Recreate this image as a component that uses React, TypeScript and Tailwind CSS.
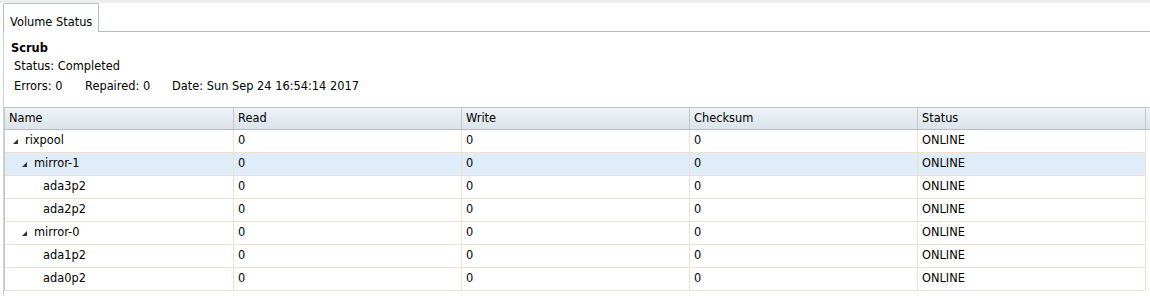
import React from "react";

type Row = { name: string; level: 0 | 1 | 2; open?: boolean; selected?: boolean };

const ROWS: Row[] = [
  { name: "rixpool", level: 0, open: true },
  { name: "mirror-1", level: 1, open: true, selected: true },
  { name: "ada3p2", level: 2 },
  { name: "ada2p2", level: 2 },
  { name: "mirror-0", level: 1, open: true },
  { name: "ada1p2", level: 2 },
  { name: "ada0p2", level: 2 },
];

const INDENT = ["w-0", "w-[9px]", "w-[18px]"];

const COLS = ["Name", "Read", "Write", "Checksum", "Status"];
const WIDTHS = ["w-[229px]", "w-[228px]", "w-[228px]", "w-[228px]", "w-[228px]"];

function Expander() {
  return (
    <svg width="5" height="5" viewBox="0 0 5 5" className="block">
      <polygon points="5,0 5,5 0,5" fill="#333" />
    </svg>
  );
}

export default function App() {
  return (
    <div className="w-[1150px] h-[296px] overflow-hidden bg-white text-[11.4px] text-black font-['DejaVu_Sans',Verdana,sans-serif]">
      {/* top strip */}
      <div className="h-[3px] bg-[#ededed]" />

      {/* tab bar */}
      <div className="flex h-[29px]">
        <div className="ml-[3px] w-[96px] h-[29px] border border-b-0 border-[#b3bcc8] rounded-t-[2px] bg-gradient-to-b from-white to-[#fbfcfe] flex items-end pl-[6px] pb-[3px] leading-[14px]">
          Volume Status
        </div>
        <div className="flex-1 border-b border-[#b3bcc8]" />
      </div>

      {/* panel */}
      <div className="ml-[3px] h-[264px] border-l border-[#cfd3d8]">
        <div className="pt-[9px] pl-[7px] font-bold leading-[14px]">Scrub</div>
        <div className="mt-[4px] pl-[10px] leading-[14px]">Status: Completed</div>
        <div className="mt-[6px] pl-[10px] flex leading-[14px]">
          <span className="w-[71px]">Errors: 0</span>
          <span className="w-[87px]">Repaired: 0</span>
          <span>Date: Sun Sep 24 16:54:14 2017</span>
        </div>

        {/* grid */}
        <div className="mt-[14px] border-l border-[#c4c8cd]">
          <div className="flex h-[23px] border-t border-b border-t-[#c2c6cc] border-b-[#b6bdc6] bg-gradient-to-b from-[#eef2f7] to-[#dce3eb]">
            {COLS.map((c, i) => (
              <div
                key={c}
                className={`${WIDTHS[i]} h-full border-r border-[#c2c8d0] pl-[4px] flex items-center`}
              >
                {c}
              </div>
            ))}
            <div className="flex-1" />
          </div>

          {ROWS.map((r) => (
            <div
              key={r.name}
              className={`flex h-[23px] w-[1141px] border-b border-[#f3dfcc] border-r ${
                r.selected ? "bg-[#dfecf9]" : "bg-white"
              }`}
            >
              <div className={`${WIDTHS[0]} h-full border-r border-[#f3dfcc] pl-[8px] flex items-center`}>
                <span className={`${INDENT[r.level]} shrink-0`} />
                <span className="w-[12px] shrink-0 flex items-center">{r.open ? <Expander /> : null}</span>
                {r.name}
              </div>
              <div className={`${WIDTHS[1]} h-full border-r border-[#f3dfcc] pl-[4px] flex items-center`}>0</div>
              <div className={`${WIDTHS[2]} h-full border-r border-[#f3dfcc] pl-[4px] flex items-center`}>0</div>
              <div className={`${WIDTHS[3]} h-full border-r border-[#f3dfcc] pl-[4px] flex items-center`}>0</div>
              <div className="flex-1 h-full pl-[4px] flex items-center">ONLINE</div>
            </div>
          ))}
        </div>
      </div>
    </div>
  );
}
